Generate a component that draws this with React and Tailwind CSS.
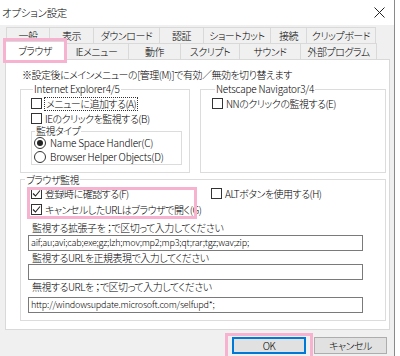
import React from "react";

function Check({ checked }) {
  return (
    <span className="inline-flex w-[11px] h-[11px] border border-[#333] bg-white shrink-0 items-center justify-center">
      {checked && (
        <svg width="9" height="9" viewBox="0 0 9 9">
          <path d="M1 4.5 L3.5 7 L8 1.5" fill="none" stroke="#222" strokeWidth="1.1" />
        </svg>
      )}
    </span>
  );
}

function Radio({ checked }) {
  return (
    <span className="inline-flex w-[12px] h-[12px] rounded-full border border-[#333] bg-white shrink-0 items-center justify-center">
      {checked && <span className="w-[6px] h-[6px] rounded-full bg-[#222]" />}
    </span>
  );
}

function CheckRow({ checked, label, focus, className = "" }) {
  return (
    <div className={"flex items-center h-[15px] gap-[3px] whitespace-nowrap " + className}>
      <Check checked={checked} />
      <span className={"leading-[12px] " + (focus ? "outline outline-1 outline-dotted outline-[#333] px-[1px]" : "")}>{label}</span>
    </div>
  );
}

function RadioRow({ checked, label, className = "" }) {
  return (
    <div className={"flex items-center h-[14px] gap-[4px] whitespace-nowrap " + className}>
      <Radio checked={checked} />
      <span className="leading-[12px] tracking-[-0.2px]">{label}</span>
    </div>
  );
}

const row1 = [
  ["一般", 44],
  ["表示", 45],
  ["ダウンロード", 67],
  ["認証", 45],
  ["ショートカット", 68],
  ["接続", 37],
  ["クリップボード", 70],
];
const row2 = [
  ["IEメニュー", 65],
  ["動作", 53],
  ["スクリプト", 60],
  ["サウンド", 62],
  ["外部プログラム", 77],
];

export default function App() {
  return (
    <div className="relative w-[400px] h-[356px] bg-white overflow-hidden text-[10px] tracking-[-0.5px] font-light text-black font-['Noto_Sans_CJK_JP','Noto_Sans',sans-serif] [font-feature-settings:'palt']">
      <div className="w-[395px] h-full bg-[#f0f0f0] border-r border-[#8a8a8a] flex flex-col">
        {/* title bar */}
        <div className="h-[25px] bg-white flex items-center justify-between pl-[2px] pr-[9px] shrink-0">
          <span className="text-[10.5px] tracking-[-0.3px]">オプション設定</span>
          <svg width="11" height="11" viewBox="0 0 11 11">
            <path d="M0.5 0.5 L10.5 10.5 M10.5 0.5 L0.5 10.5" stroke="#222" strokeWidth="1" />
          </svg>
        </div>

        {/* tabs row 1 */}
        <div className="flex ml-[6px] mt-[2px] h-[16px]">
          {row1.map(([t, w], i) => (
            <div
              key={t}
              style={{ width: w }}
              className={"h-[16px] border border-b-0 border-[#d9d9d9] bg-[#f0f0f0] flex items-center justify-center leading-[14px] whitespace-nowrap " + (i > 0 ? "-ml-px" : "")}
            >
              {t}
            </div>
          ))}
        </div>

        {/* tabs row 2 */}
        <div className="flex ml-[5px] h-[16px] items-end relative z-10">
          <div className="w-[60px] h-[19px] -mb-px bg-white border border-b-0 border-[#d9d9d9] flex items-center justify-center leading-[14px]">
            ブラウザ
          </div>
          {row2.map(([t, w]) => (
            <div
              key={t}
              style={{ width: w }}
              className="h-[16px] -ml-px border border-b-0 border-[#d9d9d9] bg-[#f0f0f0] flex items-center justify-center leading-[14px] whitespace-nowrap"
            >
              {t}
            </div>
          ))}
        </div>

        {/* panel */}
        <div className="ml-[5px] w-[385px] h-[271px] border border-[#d9d9d9] bg-white pl-[14px] pt-[8px] flex flex-col shrink-0">
          <div className="ml-[2px] leading-[14px] whitespace-nowrap">※設定後にメインメニューの[管理(M)]で有効／無効を切り替えます</div>

          <div className="flex gap-[10px]">
            <fieldset className="w-[170px] border border-[#dcdcdc] pl-[10px] pb-[7px]">
              <legend className="ml-[2px] px-[1px] leading-[14px] tracking-[-0.2px]">Internet Explorer4/5</legend>
              <CheckRow label="メニューに追加する(A)" focus />
              <CheckRow label="IEのクリックを監視する(B)" />
              <fieldset className="w-[151px] border border-[#dcdcdc] pl-[2px]">
                <legend className="ml-[1px] px-[1px] leading-[10px]">監視タイプ</legend>
                <RadioRow checked label="Name Space Handler(C)" />
                <RadioRow label="Browser Helper Objects(D)" />
              </fieldset>
            </fieldset>

            <fieldset className="w-[186px] border border-[#dcdcdc] pl-[11px]">
              <legend className="ml-[3px] px-[1px] leading-[14px] tracking-[-0.2px]">Netscape Navigator3/4</legend>
              <CheckRow label="NNのクリックの監視する(E)" />
            </fieldset>
          </div>

          <fieldset className="w-[366px] border border-[#dcdcdc] pb-[7px]">
            <legend className="ml-[4px] px-[1px] leading-[13px]">ブラウザ監視</legend>
            <div className="flex pl-[10px]">
              <div className="w-[180px]">
                <CheckRow checked label="登録時に確認する(F)" />
                <CheckRow checked label="キャンセルしたURLはブラウザで開く(G)" className="mt-[1px]" />
              </div>
              <CheckRow label="ALTボタンを使用する(H)" />
            </div>
            <div className="ml-[11px] mt-[4px] leading-[14px] whitespace-nowrap">監視する拡張子を ；で区切って入力してください</div>
            <div className="ml-[7px] w-[335px] h-[16px] border border-[#7a7a7a] bg-white pl-[2px] flex items-center leading-[12px] text-[9px] tracking-[-0.2px] whitespace-nowrap">
              aif;au;avi;cab;exe;gz;lzh;mov;mp2;mp3;qt;rar;tgz;wav;zip;
            </div>
            <div className="ml-[11px] leading-[13px] whitespace-nowrap">監視するURLを正規表現で入力してください</div>
            <div className="ml-[7px] w-[335px] h-[16px] border border-[#7a7a7a] bg-white" />
            <div className="ml-[11px] leading-[13px] whitespace-nowrap">無視するURLを ；で区切って入力してください</div>
            <div className="ml-[7px] mt-[4px] w-[335px] h-[16px] border border-[#7a7a7a] bg-white pl-[2px] flex items-center leading-[12px] text-[9px] tracking-[-0.2px] whitespace-nowrap">
              http://windowsupdate.microsoft.com/selfupd*;
            </div>
          </fieldset>
        </div>

        {/* buttons */}
        <div className="flex justify-end gap-[8px] mt-[7px] pr-[7px]">
          <button className="w-[74px] h-[17px] border border-[#0078d7] shadow-[inset_0_0_0_1px_#0078d7] bg-[#e1e1e1] flex items-center justify-center leading-[12px]">OK</button>
          <button className="w-[73px] h-[17px] border border-[#adadad] bg-[#e1e1e1] flex items-center justify-center leading-[12px]">キャンセル</button>
        </div>
      </div>

      {/* annotation boxes */}
      <div className="absolute left-[3px] top-[38px] w-[64px] h-[25px] border-[3px] border-[#f7b2d0] z-20" />
      <div className="absolute left-[27px] top-[187px] w-[170px] h-[32px] border-[3px] border-[#f7b2d0] z-20" />
      <div className="absolute left-[225px] top-[333px] w-[88px] h-[26px] border-[3px] border-[#f7b2d0] z-20" />
    </div>
  );
}
